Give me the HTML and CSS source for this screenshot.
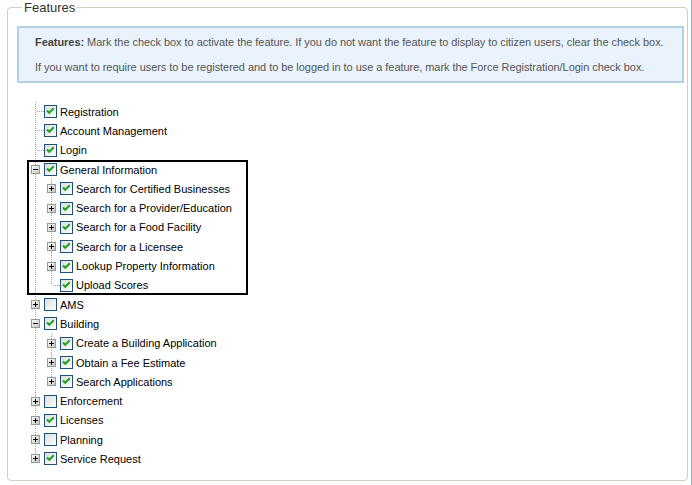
FILE: index.html
```html
<!DOCTYPE html>
<html lang="en">

<head>
    <meta charset="UTF-8">
    <title>Features</title>
    <link rel="stylesheet" href="styles.css">
</head>

<body>
    <svg class="defs" width="0" height="0">
        <defs>
            <linearGradient id="boxfill" x1="0" y1="0" x2="1" y2="1">
                <stop offset="0" stop-color="#dcdcd7"/>
                <stop offset="1" stop-color="#ffffff"/>
            </linearGradient>
            <linearGradient id="expfill" x1="0" y1="0" x2="1" y2="1">
                <stop offset="0" stop-color="#ffffff"/>
                <stop offset="1" stop-color="#c4c4bc"/>
            </linearGradient>
            <symbol id="plus" viewBox="0 0 9 9">
                <rect x="0.5" y="0.5" width="8" height="8" fill="url(#expfill)" stroke="#919b9c"/>
                <path d="M2 4.5H7M4.5 2V7" stroke="#000"/>
            </symbol>
            <symbol id="minus" viewBox="0 0 9 9">
                <rect x="0.5" y="0.5" width="8" height="8" fill="url(#expfill)" stroke="#919b9c"/>
                <path d="M2 4.5H7" stroke="#000"/>
            </symbol>
            <symbol id="on" viewBox="0 0 13 13">
                <rect x="0.5" y="0.5" width="12" height="12" fill="url(#boxfill)" stroke="#1c5180"/>
                <path d="M3 5.5L5.2 7.8L9.8 3.2" fill="none" stroke="#21a121" stroke-width="2"/>
            </symbol>
            <symbol id="off" viewBox="0 0 13 13">
                <rect x="0.5" y="0.5" width="12" height="12" fill="url(#boxfill)" stroke="#1c5180"/>
            </symbol>
        </defs>
    </svg>

    <fieldset class="features">
        <legend>Features</legend>

        <div class="info">
            <p><b>Features:</b> Mark the check box to activate the feature. If you do not want the feature to display to citizen users, clear the check box.</p>
            <p>If you want to require users to be registered and to be logged in to use a feature, mark the Force Registration/Login check box.</p>
        </div>

        <ul class="tree">
            <li><div class="node"><span class="leaf"></span><svg class="check"><use href="#on"/></svg><span>Registration</span></div></li>
            <li><div class="node"><span class="leaf"></span><svg class="check"><use href="#on"/></svg><span>Account Management</span></div></li>
            <li><div class="node"><span class="leaf"></span><svg class="check"><use href="#on"/></svg><span>Login</span></div></li>
            <li class="marked">
                <div class="node"><svg class="exp"><use href="#minus"/></svg><svg class="check"><use href="#on"/></svg><span>General Information</span></div>
                <ul>
                    <li><div class="node"><svg class="exp"><use href="#plus"/></svg><svg class="check"><use href="#on"/></svg><span>Search for Certified Businesses</span></div></li>
                    <li><div class="node"><svg class="exp"><use href="#plus"/></svg><svg class="check"><use href="#on"/></svg><span>Search for a Provider/Education</span></div></li>
                    <li><div class="node"><svg class="exp"><use href="#plus"/></svg><svg class="check"><use href="#on"/></svg><span>Search for a Food Facility</span></div></li>
                    <li><div class="node"><svg class="exp"><use href="#plus"/></svg><svg class="check"><use href="#on"/></svg><span>Search for a Licensee</span></div></li>
                    <li><div class="node"><svg class="exp"><use href="#plus"/></svg><svg class="check"><use href="#on"/></svg><span>Lookup Property Information</span></div></li>
                    <li><div class="node"><span class="leaf"></span><svg class="check"><use href="#on"/></svg><span>Upload Scores</span></div></li>
                </ul>
            </li>
            <li><div class="node"><svg class="exp"><use href="#plus"/></svg><svg class="check"><use href="#off"/></svg><span>AMS</span></div></li>
            <li>
                <div class="node"><svg class="exp"><use href="#minus"/></svg><svg class="check"><use href="#on"/></svg><span>Building</span></div>
                <ul>
                    <li><div class="node"><svg class="exp"><use href="#plus"/></svg><svg class="check"><use href="#on"/></svg><span>Create a Building Application</span></div></li>
                    <li><div class="node"><svg class="exp"><use href="#plus"/></svg><svg class="check"><use href="#on"/></svg><span>Obtain a Fee Estimate</span></div></li>
                    <li><div class="node"><svg class="exp"><use href="#plus"/></svg><svg class="check"><use href="#on"/></svg><span>Search Applications</span></div></li>
                </ul>
            </li>
            <li><div class="node"><svg class="exp"><use href="#plus"/></svg><svg class="check"><use href="#off"/></svg><span>Enforcement</span></div></li>
            <li><div class="node"><svg class="exp"><use href="#plus"/></svg><svg class="check"><use href="#on"/></svg><span>Licenses</span></div></li>
            <li><div class="node"><svg class="exp"><use href="#plus"/></svg><svg class="check"><use href="#off"/></svg><span>Planning</span></div></li>
            <li><div class="node"><svg class="exp"><use href="#plus"/></svg><svg class="check"><use href="#on"/></svg><span>Service Request</span></div></li>
        </ul>
    </fieldset>
</body>

</html>
```

FILE: styles.css
```css
* {
    box-sizing: border-box;
}

html {
    background-color: #fff;
}

body {
    margin: 0;
    min-height: 100vh;
    padding: 0 3px 0 7px;
    border-right: 1px solid #92aed6;
    font-family: "Liberation Sans", Arial, sans-serif;
    font-size: 11px;
    color: #000;
}

.defs {
    display: block;
    width: 0;
    height: 0;
}

.features {
    margin: 0;
    border: 1px solid #d0d0bf;
    border-radius: 4px;
    padding: 0 3px 11px 9px;
}

.features legend {
    margin-left: 5px;
    padding: 0 2px;
    font-size: 13px;
    line-height: 15px;
    color: #333;
}

.info {
    margin-top: 11px;
    padding: 7px 6px 7px 16px;
    border: 2px solid #b5d0e5;
    background-color: #eaf3fc;
    color: #555;
    white-space: nowrap;
    letter-spacing: -0.05px;
}

.info p {
    margin: 0;
    line-height: 14px;
}

.info p + p {
    margin-top: 11px;
}

.info b {
    color: #444;
}

.tree,
.tree ul {
    list-style: none;
    margin: 0;
    padding: 0;
    background-image: repeating-linear-gradient(to bottom, #a0a0a0 0 1px, transparent 1px 2px);
    background-repeat: no-repeat;
}

.tree {
    margin: 19px 0 0 14px;
    background-position: 4px 0;
    background-size: 1px calc(100% - 10px);
}

.tree ul {
    padding-left: 16px;
    background-position: 20px 0;
    background-size: 1px calc(100% - 10px);
}

.node {
    display: flex;
    align-items: center;
    height: 19.3px;
    white-space: nowrap;
}

.exp {
    width: 9px;
    height: 9px;
    margin-right: 4px;
    flex: none;
}

.leaf {
    width: 13px;
    height: 1px;
    flex: none;
    background-image: repeating-linear-gradient(to right, #a0a0a0 0 1px, transparent 1px 2px);
    background-repeat: no-repeat;
    background-position: 6px 0;
    background-size: 7px 1px;
}

.check {
    width: 13px;
    height: 13px;
    margin-right: 3px;
    flex: none;
}

.marked {
    width: fit-content;
    margin-left: -4px;
    padding: 0 16px 0 4px;
    outline: 2px solid #000;
    outline-offset: -2px;
}
```
